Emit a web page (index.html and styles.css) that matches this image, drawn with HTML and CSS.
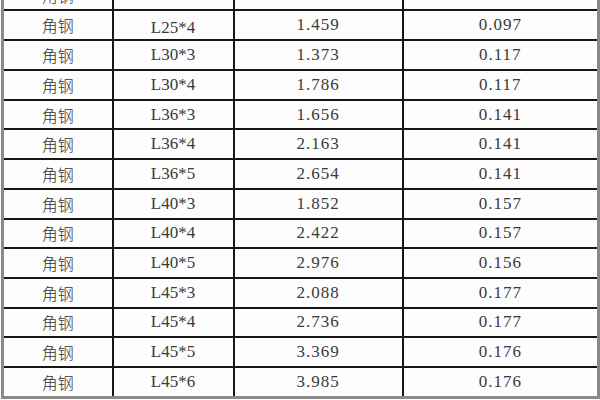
FILE: index.html
```html
<!DOCTYPE html>
<html>
<head>
<meta charset="utf-8">
<link rel="stylesheet" href="styles.css">
</head>
<body>
<div class="frame">
<table class="steel">
<colgroup><col class="c1"><col class="c2"><col class="c3"><col class="c4"></colgroup>
<tbody>
<tr><td class="name">角钢</td><td>L25*3</td><td class="num">1.124</td><td class="num">0.097</td></tr>
<tr><td class="name">角钢</td><td class="low">L25*4</td><td class="num">1.459</td><td class="num">0.097</td></tr>
<tr><td class="name">角钢</td><td>L30*3</td><td class="num">1.373</td><td class="num">0.117</td></tr>
<tr><td class="name">角钢</td><td>L30*4</td><td class="num">1.786</td><td class="num">0.117</td></tr>
<tr><td class="name">角钢</td><td>L36*3</td><td class="num">1.656</td><td class="num">0.141</td></tr>
<tr><td class="name">角钢</td><td>L36*4</td><td class="num">2.163</td><td class="num">0.141</td></tr>
<tr><td class="name">角钢</td><td>L36*5</td><td class="num">2.654</td><td class="num">0.141</td></tr>
<tr><td class="name">角钢</td><td>L40*3</td><td class="num">1.852</td><td class="num">0.157</td></tr>
<tr><td class="name">角钢</td><td>L40*4</td><td class="num">2.422</td><td class="num">0.157</td></tr>
<tr><td class="name">角钢</td><td>L40*5</td><td class="num">2.976</td><td class="num">0.156</td></tr>
<tr><td class="name">角钢</td><td>L45*3</td><td class="num">2.088</td><td class="num">0.177</td></tr>
<tr><td class="name">角钢</td><td>L45*4</td><td class="num">2.736</td><td class="num">0.177</td></tr>
<tr><td class="name">角钢</td><td>L45*5</td><td class="num">3.369</td><td class="num">0.176</td></tr>
<tr><td class="name">角钢</td><td>L45*6</td><td class="num">3.985</td><td class="num">0.176</td></tr>
</tbody>
</table>
</div>
</body>
</html>
```
FILE: styles.css
```css
html, body {
  margin: 0;
  padding: 0;
  background: #ffffff;
  overflow: hidden;
  width: 600px;
  height: 400px;
}
.frame {
  width: 600px;
  height: 400px;
  overflow: hidden;
  background: #fbfbfb;
}
.steel {
  margin-top: -21px;
  margin-left: 1px;
  width: 598px;
  table-layout: fixed;
  border-collapse: collapse;
  font-family: "Liberation Serif", "Noto Sans CJK SC", serif;
  font-size: 17px;
  color: #3a3a3a;
  background: #fdfdfd;
}
.c1 { width: 110px; }
.c2 { width: 121px; }
.c3 { width: 169px; }
.c4 { width: 196px; }
.steel td {
  height: 27.7px;
  padding: 0;
  text-align: center;
  vertical-align: middle;
  border: 2px solid #161616;
  line-height: 20px;
  white-space: nowrap;
}
.steel td:first-child {
  border-left: 3px solid #8a8a8a;
}
.steel td:last-child {
  border-right: 3px solid #8a8a8a;
}
.steel tr:last-child td {
  border-bottom: 3px solid #8a8a8a;
}
.steel td.name {
  font-family: "Noto Sans CJK SC", sans-serif;
  font-weight: 300;
  font-size: 16px;
  color: #333;
}
.steel td.num {
  letter-spacing: 1px;
}
.steel td.low {
  vertical-align: bottom;
  padding-bottom: 1px;
}
```
